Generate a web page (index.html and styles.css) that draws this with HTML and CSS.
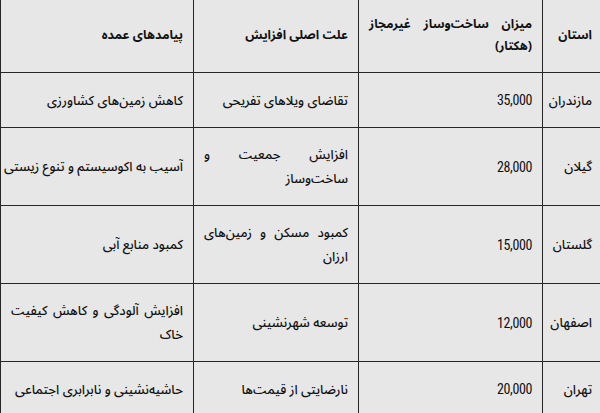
FILE: index.html
```html
<!DOCTYPE html>
<html lang="fa">
<head>
<meta charset="utf-8">
<title>ساخت‌وساز غیرمجاز</title>
<link rel="stylesheet" href="styles.css">
</head>
<body>
<table class="stats" dir="rtl">
  <colgroup>
    <col class="c-prov">
    <col class="c-area">
    <col class="c-cause">
    <col class="c-effect">
  </colgroup>
  <thead>
    <tr>
      <th>استان</th>
      <th><span class="hj"><span>میزان</span><span>ساخت‌وساز</span><span>غیرمجاز</span></span><span class="ln">(هکتار)</span></th>
      <th>علت اصلی افزایش</th>
      <th>پیامدهای عمده</th>
    </tr>
  </thead>
  <tbody>
    <tr>
      <td>مازندران</td>
      <td><span class="num">35,000</span></td>
      <td>تقاضای ویلاهای تفریحی</td>
      <td>کاهش زمین‌های کشاورزی</td>
    </tr>
    <tr>
      <td>گیلان</td>
      <td><span class="num">28,000</span></td>
      <td><span class="jl">افزایش جمعیت و</span><span class="ln">ساخت‌وساز</span></td>
      <td>آسیب به اکوسیستم و تنوع زیستی</td>
    </tr>
    <tr>
      <td>گلستان</td>
      <td><span class="num">15,000</span></td>
      <td><span class="jl">کمبود مسکن و زمین‌های</span><span class="ln">ارزان</span></td>
      <td>کمبود منابع آبی</td>
    </tr>
    <tr>
      <td>اصفهان</td>
      <td><span class="num">12,000</span></td>
      <td>توسعه شهرنشینی</td>
      <td><span class="jl">افزایش آلودگی و کاهش کیفیت</span><span class="ln">خاک</span></td>
    </tr>
    <tr>
      <td>تهران</td>
      <td><span class="num">20,000</span></td>
      <td>نارضایتی از قیمت‌ها</td>
      <td>حاشیه‌نشینی و نابرابری اجتماعی</td>
    </tr>
  </tbody>
</table>
</body>
</html>
```

FILE: styles.css
```css
html, body {
  margin: 0;
  padding: 0;
  overflow: hidden;
  background: #e7e7e7;
}

body {
  font-family: "Noto Sans Arabic", "Vazirmatn", "DejaVu Sans", sans-serif;
  color: #111111;
}

.stats {
  border-collapse: collapse;
  table-layout: fixed;
  width: 602px;
  direction: rtl;
}

.c-prov { width: 60px; }
.c-area { width: 184px; }
.c-cause { width: 165px; }
.c-effect { width: 193px; }

.stats th,
.stats td {
  border: 1px solid #262626;
  padding: 15px 10px 14px;
  text-align: justify;
  vertical-align: middle;
  font-size: 13px;
  font-weight: 500;
  line-height: 24px;
  white-space: nowrap;
}

.stats th {
  border-top: none;
  padding: 13px 10px 15px;
  line-height: 22px;
  font-size: 12.5px;
  font-weight: bold;
  text-align: right;
}

.hj {
  display: flex;
  justify-content: space-between;
}

.jl {
  display: block;
  text-align: justify;
  text-align-last: justify;
}

.ln {
  display: block;
}

.num {
  font-family: "Roboto", "Liberation Sans", sans-serif;
  font-stretch: condensed;
  font-size: 14px;
  font-weight: 400;
  letter-spacing: -0.4px;
}
```
